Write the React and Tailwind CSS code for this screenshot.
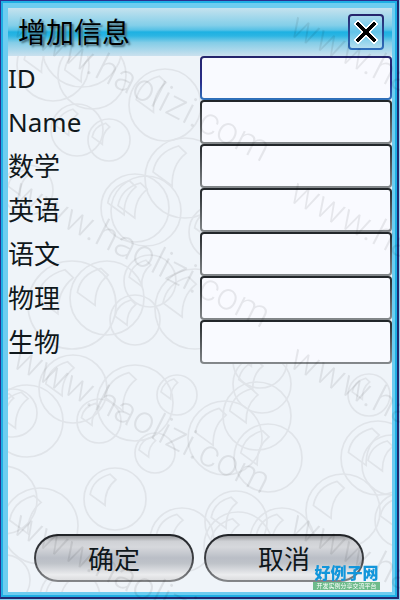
import React, { useState } from 'react';

const FIELDS = [
    { id: 'id', label: 'ID' },
    { id: 'name', label: 'Name' },
    { id: 'math', label: '数学' },
    { id: 'english', label: '英语' },
    { id: 'chinese', label: '语文' },
    { id: 'physics', label: '物理' },
    { id: 'biology', label: '生物' },
];

// [cx, cy, r]
const BUBBLES = [
    [45, 57, 36], [74, 39, 40], [84, 67, 34], [157, 97, 36], [69, 122, 26], [101, 132, 21],
    [177, 170, 40], [127, 200, 34], [138, 203, 35], [209, 224, 28], [20, 182, 25],
    [64, 297, 44], [99, 290, 37], [127, 312, 25], [142, 273, 26], [187, 301, 40],
    [65, 381, 34], [127, 395, 38], [169, 387, 20], [5, 405, 24], [19, 413, 36],
    [91, 413, 22], [147, 445, 20], [217, 430, 37], [249, 408, 34], [254, 376, 29],
    [252, 353, 27], [260, 450, 34], [361, 387, 21], [370, 450, 37], [384, 457, 30],
    [335, 503, 37], [228, 514, 31], [230, 538, 34], [274, 532, 32], [394, 512, 27],
    [107, 491, 31], [32, 518, 38], [-5, 492, 34], [-3, 572, 25], [174, 532, 32], [62, 590, 30],
];

const WATERMARKS = [
    [10, 34], [287, 34], [10, 200], [287, 200], [10, 366], [287, 366], [10, 532], [287, 532],
];

const Bubbles = () => (
    <svg className="absolute inset-0 h-full w-full" fill="none" stroke="#e0e4e9" aria-hidden="true">
        {BUBBLES.map(([cx, cy, r]) => (
            <g key={`${cx}-${cy}`} transform={`translate(${cx} ${cy}) scale(${r})`} strokeWidth={1.7 / r}>
                <circle r="1" />
                <path d="M-.8-.15C-.74-.48-.52-.7-.16-.8L.03-.62C-.25-.4-.33-.12-.32.2Z" />
            </g>
        ))}
    </svg>
);

const Watermark = () => (
    <svg
        className="pointer-events-none absolute inset-0 h-full w-full font-[Roboto,sans-serif] text-[38px] font-light"
        fill="#000"
        fillOpacity="0.08"
        aria-hidden="true"
    >
        {WATERMARKS.map(([x, y]) => (
            <text key={`${x}-${y}`} transform={`translate(${x} ${y}) rotate(27)`}>www.haolizi.com</text>
        ))}
    </svg>
);

const CloseIcon = () => (
    <svg className="h-6 w-6" viewBox="0 0 24 24" fill="none" shapeRendering="crispEdges">
        <path d="M4 4L20 20M20 4L4 20" stroke="#fff" strokeWidth="6" strokeLinecap="square" />
        <path d="M4 4L20 20M20 4L4 20" stroke="#000" strokeWidth="4" strokeLinecap="square" />
    </svg>
);

const Field = ({ id, label, value, onChange }) => (
    <div className="flex h-11 items-center">
        <label htmlFor={id} className="w-1/2 text-[26px] leading-8 text-[#10181c]">{label}</label>
        <input
            id={id}
            type="text"
            value={value}
            onChange={onChange}
            autoFocus={id === 'id'}
            className="h-11 w-1/2 rounded-sm border-2 border-transparent px-2 text-2xl outline-none [background:linear-gradient(#f9faff,#f9faff)_padding-box,linear-gradient(#202428,#85898c)_border-box] focus:[background:linear-gradient(#f9faff,#f9faff)_padding-box,linear-gradient(#25246b,#2a2e8c_60%,#2f74bd)_border-box]"
        />
    </div>
);

const PillButton = ({ children, ...props }) => (
    <button
        type="button"
        className="h-12 w-40 rounded-full border-2 border-transparent pt-px text-[26px] leading-8 text-[#10181c] [background:linear-gradient(#97999d,#cfd1d5_12%,#d6d8dc_25%,#babec6_50%,#bfc3c9_62%,#ebecee_88%,#dcdddf)_padding-box,linear-gradient(#1f2226,#3c3e42_50%,#85878a)_border-box]"
        {...props}
    >
        {children}
    </button>
);

const SiteBadge = () => (
    <div className="pointer-events-none absolute right-5 bottom-2.5 flex w-[67px] flex-col items-center">
        <span className="text-base leading-[18px] font-black whitespace-nowrap text-[#1296db]">好例子网</span>
        <span className="w-full bg-[#6dbb8b] text-center text-[6px] leading-2 whitespace-nowrap text-white">开发实例分享交流平台</span>
    </div>
);

const App = () => {
    const [values, setValues] = useState({});

    const handleChange = (id) => (e) => setValues({ ...values, [id]: e.target.value });

    return (
        <div className="relative flex min-h-screen flex-col overflow-hidden bg-[#8fd0f0] pr-px pb-px font-['Noto_Sans','Noto_Sans_CJK_SC',sans-serif]">
            <div className="flex grow flex-col border-t border-r-2 border-b-2 border-l border-t-[#2b3191] border-r-[#20296f] border-b-[#20296f] border-l-[#2b3191]">
                <div className="flex grow flex-col border-2 border-[#1fb0e5]">
                    <div className="flex grow flex-col border-t-5 border-r-3 border-b-3 border-l-5 border-[#6dcdf0]">
                        <main className="relative flex grow flex-col overflow-hidden bg-[#eff4f9]">
                            <Bubbles />
                            <header className="relative flex h-12 items-center justify-between bg-[linear-gradient(#c5e2ee,#83cfe9_36%,#55c1e6_46%,#1db1e2_50%,#2cb5e3_58%,#83cde7_72%,#cbe1ee)] pr-2 pl-2.5">
                                <h1 className="text-[28px] leading-9 text-black [text-shadow:2px_2px_2px_#4c7280]">增加信息</h1>
                                <button
                                    type="button"
                                    aria-label="关闭"
                                    className="flex h-9 w-9 items-center justify-center rounded-sm border-2 border-transparent [background:linear-gradient(#a9d9ec,#62c4e8_50%,#b4deef)_padding-box,linear-gradient(#25246b,#2f70bd)_border-box]"
                                >
                                    <CloseIcon />
                                </button>
                            </header>
                            <form className="relative flex grow flex-col">
                                {FIELDS.map(({ id, label }) => (
                                    <Field key={id} id={id} label={label} value={values[id] || ''} onChange={handleChange(id)} />
                                ))}
                                <div className="mt-auto flex justify-center gap-2.5 pt-4 pr-0.5 pb-2.5">
                                    <PillButton>确定</PillButton>
                                    <PillButton onClick={() => setValues({})}>取消</PillButton>
                                </div>
                            </form>
                        </main>
                    </div>
                </div>
            </div>
            <Watermark />
            <SiteBadge />
        </div>
    );
};

export default App;
